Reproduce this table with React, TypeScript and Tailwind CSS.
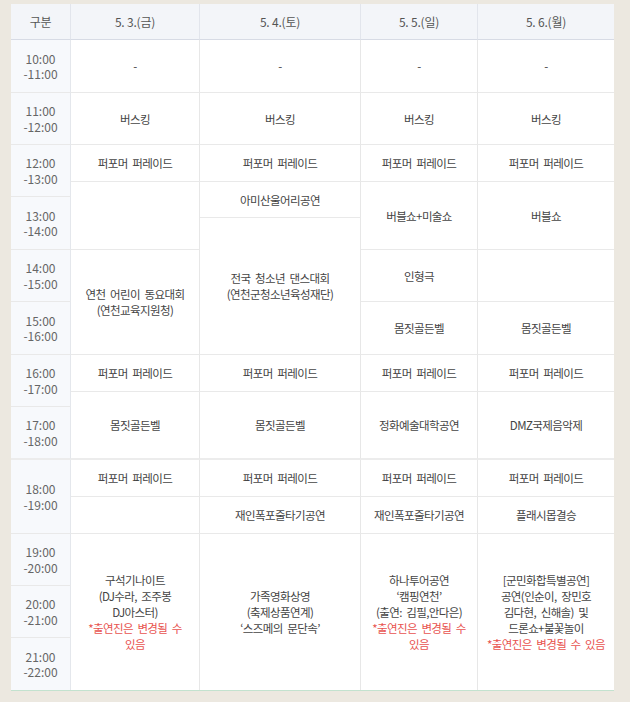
import React from "react";

type Cell = {
  c: number; // column start (1-based)
  r: number; // row start
  s?: number; // row span
  lines?: React.ReactNode[];
  kind?: "head" | "time" | "body";
};

const rowStart: Record<number, string> = {
  1: "row-start-1",
  2: "row-start-2",
  3: "row-start-3",
  4: "row-start-4",
  5: "row-start-5",
  6: "row-start-6",
  7: "row-start-7",
  8: "row-start-8",
  9: "row-start-9",
  10: "row-start-10",
  11: "row-start-11",
  12: "row-start-12",
  13: "row-start-13",
  14: "row-start-14",
  15: "row-start-15",
  16: "row-start-16",
  17: "row-start-17",
};

const rowSpan: Record<number, string> = {
  1: "row-span-1",
  2: "row-span-2",
  3: "row-span-3",
};

const colStart: Record<number, string> = {
  1: "col-start-1",
  2: "col-start-2",
  3: "col-start-3",
  4: "col-start-4",
  5: "col-start-5",
};

const Red = ({ children }: { children: React.ReactNode }) => (
  <span className="text-[#e8534f]">{children}</span>
);

const PP = "퍼포머 퍼레이드";

const cells: Cell[] = [
  // header
  { c: 1, r: 1, kind: "head", lines: ["구분"] },
  { c: 2, r: 1, kind: "head", lines: ["5. 3.(금)"] },
  { c: 3, r: 1, kind: "head", lines: ["5. 4.(토)"] },
  { c: 4, r: 1, kind: "head", lines: ["5. 5.(일)"] },
  { c: 5, r: 1, kind: "head", lines: ["5. 6.(월)"] },
  // time column
  { c: 1, r: 2, kind: "time", lines: ["10:00", "-11:00"] },
  { c: 1, r: 3, kind: "time", lines: ["11:00", "-12:00"] },
  { c: 1, r: 4, s: 2, kind: "time", lines: ["12:00", "-13:00"] },
  { c: 1, r: 6, s: 2, kind: "time", lines: ["13:00", "-14:00"] },
  { c: 1, r: 8, kind: "time", lines: ["14:00", "-15:00"] },
  { c: 1, r: 9, kind: "time", lines: ["15:00", "-16:00"] },
  { c: 1, r: 10, s: 2, kind: "time", lines: ["16:00", "-17:00"] },
  { c: 1, r: 12, kind: "time", lines: ["17:00", "-18:00"] },
  { c: 1, r: 13, s: 2, kind: "time", lines: ["18:00", "-19:00"] },
  { c: 1, r: 15, kind: "time", lines: ["19:00", "-20:00"] },
  { c: 1, r: 16, kind: "time", lines: ["20:00", "-21:00"] },
  { c: 1, r: 17, kind: "time", lines: ["21:00", "-22:00"] },
  // 5.3
  { c: 2, r: 2, lines: ["-"] },
  { c: 2, r: 3, lines: ["버스킹"] },
  { c: 2, r: 4, lines: [PP] },
  { c: 2, r: 5, s: 3, lines: [] },
  { c: 2, r: 8, s: 2, lines: ["연천 어린이 동요대회", "(연천교육지원청)"] },
  { c: 2, r: 10, lines: [PP] },
  { c: 2, r: 11, s: 2, lines: ["몸짓골든벨"] },
  { c: 2, r: 13, lines: [PP] },
  { c: 2, r: 14, lines: [] },
  {
    c: 2,
    r: 15,
    s: 3,
    lines: [
      "구석기나이트",
      "(DJ수라, 조주봉",
      "DJ아스터)",
      <Red key="a">*출연진은 변경될 수</Red>,
      <Red key="b">있음</Red>,
    ],
  },
  // 5.4
  { c: 3, r: 2, lines: ["-"] },
  { c: 3, r: 3, lines: ["버스킹"] },
  { c: 3, r: 4, lines: [PP] },
  { c: 3, r: 5, s: 2, lines: ["아미산울어리공연"] },
  { c: 3, r: 7, s: 3, lines: ["전국 청소년 댄스대회", "(연천군청소년육성재단)"] },
  { c: 3, r: 10, lines: [PP] },
  { c: 3, r: 11, s: 2, lines: ["몸짓골든벨"] },
  { c: 3, r: 13, lines: [PP] },
  { c: 3, r: 14, lines: ["재인폭포줄타기공연"] },
  {
    c: 3,
    r: 15,
    s: 3,
    lines: ["가족영화상영", "(축제상품연계)", "‘스즈메의 문단속’"],
  },
  // 5.5
  { c: 4, r: 2, lines: ["-"] },
  { c: 4, r: 3, lines: ["버스킹"] },
  { c: 4, r: 4, lines: [PP] },
  { c: 4, r: 5, s: 3, lines: ["버블쇼+미술쇼"] },
  { c: 4, r: 8, lines: ["인형극"] },
  { c: 4, r: 9, lines: ["몸짓골든벨"] },
  { c: 4, r: 10, lines: [PP] },
  { c: 4, r: 11, s: 2, lines: ["정화예술대학공연"] },
  { c: 4, r: 13, lines: [PP] },
  { c: 4, r: 14, lines: ["재인폭포줄타기공연"] },
  {
    c: 4,
    r: 15,
    s: 3,
    lines: [
      "하나투어공연",
      "‘캠핑연천’",
      "(출연: 김필,안다은)",
      <Red key="a">*출연진은 변경될 수</Red>,
      <Red key="b">있음</Red>,
    ],
  },
  // 5.6
  { c: 5, r: 2, lines: ["-"] },
  { c: 5, r: 3, lines: ["버스킹"] },
  { c: 5, r: 4, lines: [PP] },
  { c: 5, r: 5, s: 3, lines: ["버블쇼"] },
  { c: 5, r: 8, lines: [] },
  { c: 5, r: 9, lines: ["몸짓골든벨"] },
  { c: 5, r: 10, lines: [PP] },
  { c: 5, r: 11, s: 2, lines: ["DMZ국제음악제"] },
  { c: 5, r: 13, lines: [PP] },
  { c: 5, r: 14, lines: ["플래시몹결승"] },
  {
    c: 5,
    r: 15,
    s: 3,
    lines: [
      "[군민화합특별공연]",
      "공연(인순이, 장민호",
      "김다현, 신해솔) 및",
      "드론쇼+불꽃놀이",
      <Red key="a">*출연진은 변경될 수 있음</Red>,
    ],
  },
];

function CellView({ cell }: { cell: Cell }) {
  const kind = cell.kind ?? "body";
  const span = cell.s ?? 1;
  const endsAtThick = cell.r + span === 13; // line at 460
  const classes = [
    colStart[cell.c],
    rowStart[cell.r],
    rowSpan[span],
    "flex flex-col items-center justify-center text-center",
    cell.c < 5 ? "border-r" : "",
    kind === "head"
      ? "bg-[#f3f5f9] border-b border-b-[#d7dbe5] border-r-[#e2e5ec] text-[12px] text-[#555] tracking-[-0.2px]"
      : kind === "time"
      ? "bg-[#f7f9fc] border-r-[#e4e7ec] text-[12px] leading-[15.5px] text-[#666]"
      : "bg-white border-r-[#e7e7e7] text-[11.5px] leading-[16px] text-[#444] tracking-[-0.6px] [word-spacing:2.5px]",
    kind !== "head" && cell.r + span <= 17
      ? endsAtThick
        ? "border-b-2 border-b-[#ececec]"
        : "border-b border-b-[#e9e9e9]"
      : "",
  ].join(" ");
  return (
    <div className={classes}>
      {cell.lines?.map((l, i) => (
        <div key={i} className="whitespace-nowrap">
          {l}
        </div>
      ))}
    </div>
  );
}

export default function App() {
  return (
    <div
      className="w-full h-[702px] bg-[#ece8e0] pt-[4px] pl-[11px]"
      style={{ fontFamily: '"Noto Sans CJK KR", "Noto Sans", sans-serif' }}
    >
      <div className="w-[603px] border-b border-b-[#c3e2cf]">
        <div className="grid grid-cols-[60px_129px_161px_117px_136px] grid-rows-[36px_53px_52px_37px_15px_21px_32px_52px_53px_37px_15px_53px_37px_37px_52px_52px_52px]">
          {cells.map((cell, i) => (
            <CellView key={i} cell={cell} />
          ))}
        </div>
      </div>
    </div>
  );
}
